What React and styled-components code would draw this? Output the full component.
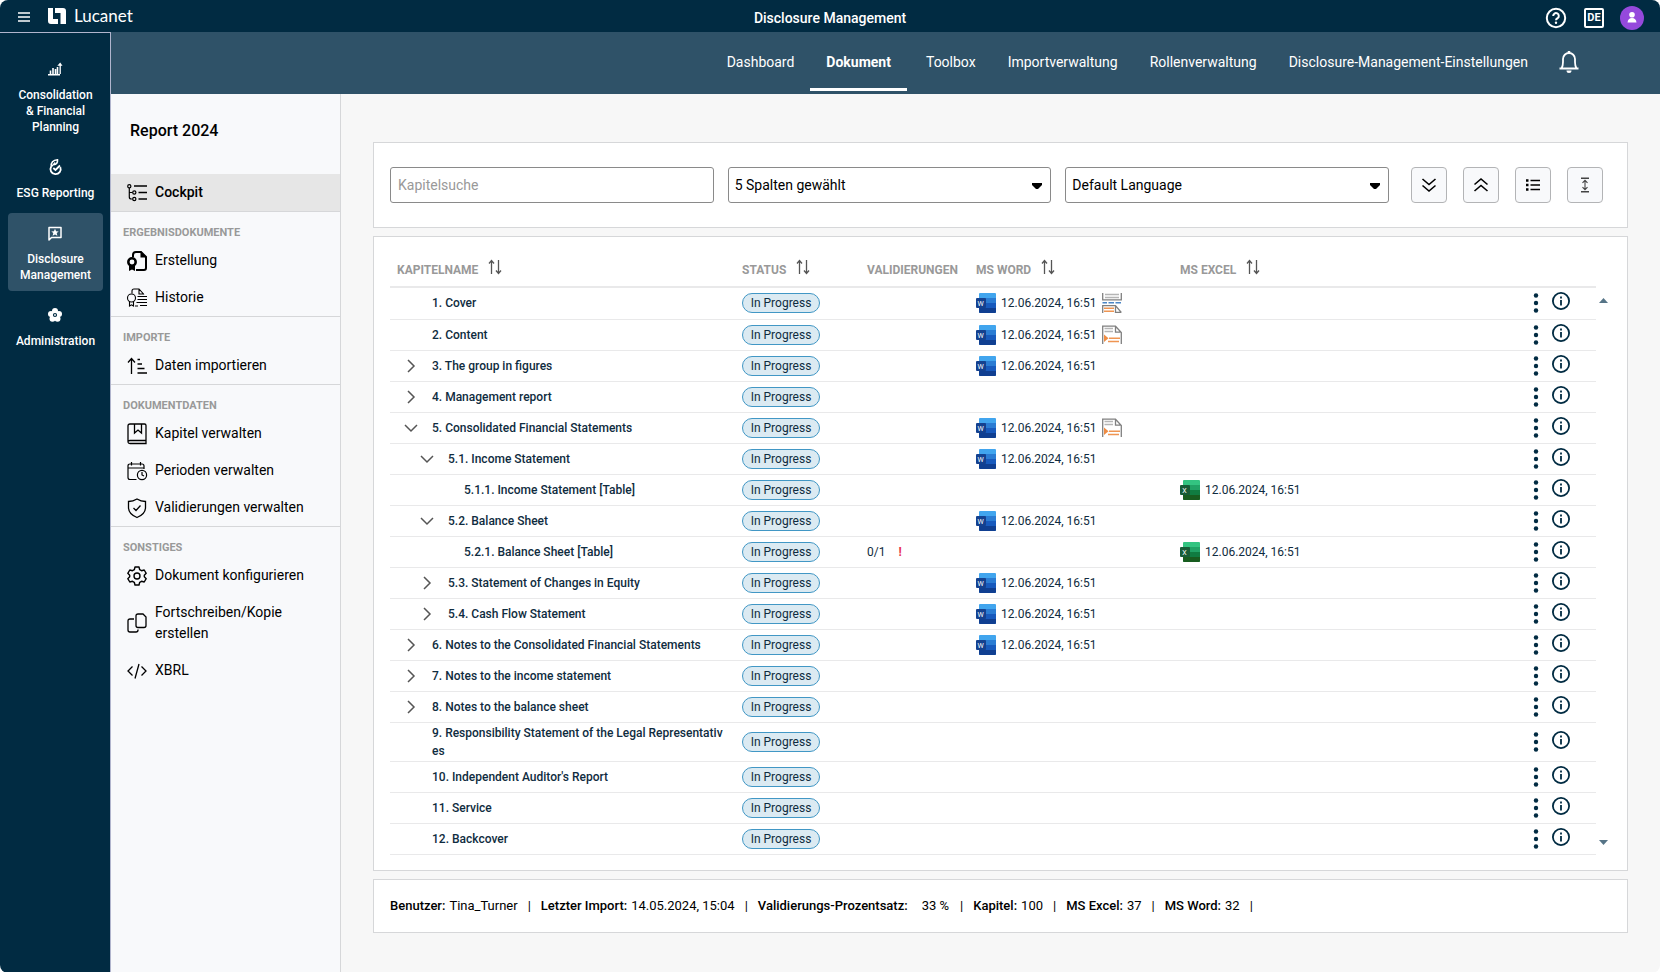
import React from "react";
import styled, { createGlobalStyle, css } from "styled-components";

const color = {
  navy: "#012b42",
  steel: "#2f5268",
  ink: "#0f2c40",
  muted: "#999999",
  line: "#d6d7d9",
  rowLine: "#e9e9ea",
  page: "#f7f7f7",
  panel: "#f8f9fb",
};

const GlobalStyle = createGlobalStyle`
  *, *::before, *::after { box-sizing: border-box; }
  body {
    margin: 0;
    background: #ffffff;
    color: #000000;
    font-family: Roboto, "Liberation Sans", sans-serif;
    font-size: 14px;
  }
  button, input, select { font: inherit; color: inherit; }
  a { color: inherit; text-decoration: none; }
  svg { display: block; flex: none; }
`;

/* ---------- Shell ---------- */

const Shell = styled.div`
  display: flex;
  flex-direction: column;
  min-height: 100vh;
  border-radius: 8px;
  overflow: hidden;
  background: ${color.page};
`;

const TopBar = styled.header`
  display: grid;
  grid-template-columns: 1fr auto 1fr;
  align-items: center;
  height: 32px;
  padding: 0 16px;
  background: ${color.navy};
  color: #ffffff;
`;

const TopGroup = styled.div`
  display: flex;
  align-items: center;
  gap: 16px;
  justify-content: ${(p) => (p.$end ? "flex-end" : "flex-start")};
  padding-top: ${(p) => (p.$end ? "4px" : "0")};
`;

const BareButton = styled.button`
  display: flex;
  align-items: center;
  justify-content: center;
  padding: 0;
  border: 0;
  background: none;
  cursor: pointer;
`;

const HelpButton = styled(BareButton)`
  width: 24px;
`;

const Brand = styled.a`
  display: flex;
  align-items: center;
  gap: 8px;
  font-family: Lato, Roboto, sans-serif;
  font-size: 17px;
  line-height: 24px;
`;

const AppTitle = styled.div`
  padding-top: 4px;
  font-size: 14px;
  font-weight: 500;
  line-height: 20px;
`;

const LanguageButton = styled(BareButton)`
  width: 20px;
  height: 20px;
  border: 2px solid #ffffff;
  border-radius: 2px;
  font-size: 11px;
  font-weight: 700;
  line-height: 16px;
`;

const Avatar = styled(BareButton)`
  width: 24px;
  height: 24px;
  border-radius: 50%;
  background: #9549dc;
`;

const Body = styled.div`
  display: flex;
  flex: 1;
`;

const ProductNav = styled.nav`
  display: flex;
  flex-direction: column;
  gap: 4px;
  flex: none;
  width: 111px;
  padding: 16px 7px 16px 8px;
  border-top: 1px solid #b1b5cd;
  border-right: 1px solid #b1b5cd;
  background: ${color.navy};
`;

const ProductLink = styled.a`
  display: flex;
  flex-direction: column;
  align-items: center;
  gap: 10px;
  padding: 12px 8px 8px;
  border-radius: 4px;
  background: ${(p) => (p.$active ? color.steel : "transparent")};
  color: #ffffff;
  font-size: 12px;
  font-weight: 500;
  line-height: 16px;
  text-align: center;
`;

const Workspace = styled.div`
  display: flex;
  flex-direction: column;
  flex: 1;
  min-width: 0;
`;

const TabBar = styled.nav`
  display: flex;
  justify-content: flex-end;
  align-items: center;
  height: 62px;
  padding-right: 80px;
  background: ${color.steel};
  color: #ffffff;
`;

const Tab = styled.a`
  display: flex;
  align-items: center;
  height: 56px;
  padding: 0 16px;
  border-bottom: 3px solid transparent;
  line-height: 20px;
  ${(p) =>
    p.$active &&
    css`
      margin-right: 3px;
      border-color: #ffffff;
      font-weight: 700;
    `}
`;

const BellButton = styled(BareButton)`
  width: 22px;
  height: 24px;
  margin: 0 0 2px 14px;
`;

const Columns = styled.div`
  display: flex;
  flex: 1;
`;

/* ---------- Report sidebar ---------- */

const Sidebar = styled.aside`
  flex: none;
  width: 230px;
  border-right: 1px solid ${color.line};
  background: ${color.panel};
`;

const ReportTitle = styled.h1`
  margin: 0;
  padding: 25px 19px 31px;
  font-size: 16px;
  font-weight: 500;
  line-height: 24px;
`;

const MenuSection = styled.section`
  border-bottom: ${(p) => (p.$last ? "0" : `1px solid ${color.line}`)};
`;

const MenuHeading = styled.h2`
  margin: 0;
  padding: 13px 12px 1px;
  color: ${color.muted};
  font-size: 11px;
  font-weight: 700;
  line-height: 16px;
`;

const MenuLink = styled.a`
  display: flex;
  align-items: center;
  gap: 8px;
  min-height: 37px;
  padding: 8px 16px;
  line-height: 21px;
  ${(p) =>
    p.$active &&
    css`
      background: #e6e6e6;
      font-weight: 500;
    `}
`;

/* ---------- Main area ---------- */

const Main = styled.main`
  display: flex;
  flex-direction: column;
  gap: 8px;
  flex: 1;
  min-width: 0;
  padding: 48px 32px 40px;
`;

const Card = styled.section`
  border: 1px solid ${color.line};
  background: #ffffff;
`;

const Toolbar = styled(Card)`
  display: flex;
  align-items: center;
  gap: 22px;
  padding: 24px 24px 24px 16px;
`;

const Fields = styled.div`
  display: grid;
  grid-template-columns: repeat(3, 1fr);
  gap: 14px;
  flex: 1;
`;

const fieldStyle = css`
  width: 100%;
  height: 36px;
  border: 1px solid #8a8a8a;
  border-radius: 3px;
  background: #ffffff;
`;

const SearchInput = styled.input`
  ${fieldStyle}
  padding: 0 7px;
  &::placeholder {
    color: ${color.muted};
    opacity: 1;
  }
`;

const SelectBox = styled.div`
  position: relative;
  svg {
    position: absolute;
    top: 16px;
    right: 9px;
    pointer-events: none;
  }
`;

const Select = styled.select`
  ${fieldStyle}
  padding: 0 24px 0 6px;
  appearance: none;
`;

const ButtonGroup = styled.div`
  display: flex;
  gap: 16px;
`;

const ToolButton = styled(BareButton)`
  width: 36px;
  height: 36px;
  border: 1px solid #b3b4b6;
  border-radius: 4px;
  background: ${color.panel};
`;

const TableCard = styled(Card)`
  display: flex;
  padding: 16px 16px 15px;
`;

const Table = styled.table`
  flex: 1;
  width: 100%;
  table-layout: fixed;
  border-collapse: separate;
  border-spacing: 0;
  color: ${color.ink};
  font-size: 12px;
  line-height: 18px;
`;

const HeadCell = styled.th`
  width: ${(p) => p.$width || "auto"};
  height: 35px;
  padding: 0 7px;
  border-bottom: 2px solid ${color.rowLine};
  color: ${color.muted};
  font-weight: 700;
  text-align: left;
  white-space: nowrap;
`;

const HeadLabel = styled.span`
  display: flex;
  align-items: center;
  gap: 10px;
  padding-top: 1px;
  button {
    margin-bottom: 6px;
  }
`;

const Row = styled.tr`
  td {
    height: 31px;
  }
  &:first-child td {
    height: 32px;
    padding-bottom: 3px;
  }
`;

const Cell = styled.td`
  padding: 1px 7px;
  border-bottom: 1px solid ${color.rowLine};
`;

const NameLine = styled.div`
  display: flex;
  align-items: center;
  padding-left: ${(p) => (p.$level - 1) * 16 + 6}px;
`;

const ChevronSlot = styled.span`
  display: flex;
  justify-content: center;
  flex: none;
  width: 16px;
  margin-right: 13px;
`;

const ChapterName = styled.span`
  font-weight: 500;
  word-break: break-all;
`;

const StatusPill = styled.span`
  display: block;
  width: 78px;
  height: 20px;
  border: 1px solid #4197c5;
  border-radius: 10px;
  background: #dbeaf2;
  line-height: 18px;
  text-align: center;
`;

const FileLink = styled.a`
  display: flex;
  align-items: center;
  gap: 5px;
`;

const Validation = styled.span`
  display: flex;
  gap: 13px;
  strong {
    color: #e8334f;
    font-weight: 700;
  }
`;

const RowActions = styled.div`
  display: flex;
  justify-content: flex-end;
  align-items: center;
  gap: 13px;
  padding-right: 19px;
`;

const InfoButton = styled(BareButton)`
  margin-bottom: 4px;
`;

const ScrollRail = styled.div`
  display: flex;
  flex-direction: column;
  justify-content: space-between;
  align-items: center;
  flex: none;
  width: 15px;
  padding: 45px 0 10px;
`;

const StatusBar = styled(Card)`
  display: flex;
  flex-wrap: wrap;
  padding: 16px;
  font-size: 13px;
  line-height: 20px;
`;

const Stat = styled.span`
  display: flex;
  gap: ${(p) => (p.$wide ? "14px" : "4px")};
  b {
    font-weight: 500;
  }
  &::after {
    content: "|";
    margin: 0 10px 0 ${(p) => (p.$wide ? "-3px" : "6px")};
  }
`;

/* ---------- Icons ---------- */

const Svg = ({ w = 20, h = 20, x = 0, sw = 1, children, ...rest }) => (
  <svg
    width={w}
    height={h}
    viewBox={`${x} 0 ${w} ${h}`}
    fill="none"
    stroke="currentColor"
    strokeWidth={sw}
    overflow="visible"
    aria-hidden="true"
    {...rest}
  >
    {children}
  </svg>
);

const HamburgerIcon = () => (
  <Svg w={16} h={16} sw={1.6}>
    <path d="M2 5H14M2 9H14M2 13H14" />
  </Svg>
);

const LogoIcon = () => (
  <Svg w={18} h={16} stroke="none" fill="#ffffff">
    <path d="M0 0H5V11H10V16H3Q0 16 0 13Z" />
    <path d="M7 0H15Q18 0 18 3V16H12.500V5H7Z" />
  </Svg>
);

const HelpIcon = () => (
  <Svg w={22} h={22} sw={2}>
    <circle cx="11" cy="11" r="9.200" />
    <path d="M8.200 9A2.800 2.800 0 1 1 12.600 11.200Q11 12.200 11 13.200" />
    <circle cx="11" cy="15.800" r="1.200" fill="currentColor" stroke="none" />
  </Svg>
);

const UserIcon = () => (
  <Svg w={12} h={14} stroke="none" fill="#ffffff">
    <circle cx="6" cy="3.800" r="2.800" />
    <path d="M1.500 11.500Q2 7 6 7T10.500 11.500Z" />
  </Svg>
);

const BellIcon = () => (
  <Svg w={22} h={24} sw={1.8}>
    <path d="M1.500 18.500H20.500M3.500 18.500Q5 16 5 12V9A6 6 0 0 1 17 9V12Q17 16 18.500 18.500" />
    <path d="M11 1V3" strokeWidth="2.500" />
    <path d="M8.500 20.500A2.500 2.500 0 0 0 13.500 20.500Z" fill="currentColor" stroke="none" />
  </Svg>
);

const ChartIcon = () => (
  <Svg w={16} h={16} x={1}>
    <path d="M1 13.700H13" strokeWidth="1.400" />
    <path d="M3.500 13V9.500M6 13V7M8.500 13V8M10.500 13V6" strokeWidth="1.600" />
    <path d="M13.200 13V3" strokeWidth="1.300" />
    <path d="M10.300 4.800L13.200 1.500L15.500 4.800Z" fill="currentColor" stroke="none" />
  </Svg>
);

const LeafIcon = () => (
  <Svg w={16} h={16} x={0} sw={1.800}>
    <path d="M12.300 8.200A5.100 5.100 0 1 1 3.200 7.500" />
    <path d="M3.300 7.500C2.800 3.500 5 1 9.500 .8C9.800 3.500 8.500 5.500 5.500 5.800" strokeWidth="1.600" />
    <path d="M3.300 7.800L7.200 3.500" strokeWidth="1.200" />
    <path d="M5.300 9L7.500 11L12 6.500" />
  </Svg>
);

const DisclosureIcon = () => (
  <Svg w={16} h={16} x={1} sw={1.5}>
    <path d="M2 15V2.500H14V12.500H4.500Z" strokeLinejoin="round" />
    <path
      d="M8 3.800L9.100 6.200L11.700 6.400L9.700 8.100L10.400 10.800L8 9.400L5.600 10.800L6.300 8.100L4.300 6.400L6.900 6.200Z"
      fill="currentColor"
      stroke="none"
    />
  </Svg>
);

const FlowerIcon = () => (
  <Svg w={16} h={16} x={1} stroke="none" fill="#ffffff">
    <circle cx="8" cy="4" r="3" />
    <circle cx="12" cy="7" r="3" />
    <circle cx="10.500" cy="11.800" r="3" />
    <circle cx="5.500" cy="11.800" r="3" />
    <circle cx="4" cy="7" r="3" />
    <circle cx="8" cy="8" r="3.500" />
    <circle cx="8" cy="8" r="1.500" fill="#ffffff" stroke={color.navy} strokeWidth="1.200" />
  </Svg>
);

const TreeIcon = () => (
  <Svg sw={1.2}>
    <circle cx="2.300" cy="3.300" r="1.600" />
    <circle cx="7.300" cy="9.500" r="1.600" />
    <circle cx="7.300" cy="16" r="1.600" />
    <path d="M2.300 5V14Q2.300 16 4.300 16H5.500M2.300 9.500H5.500" />
    <path d="M7 3H20M11.500 9.500H20M11.500 16H20" strokeWidth="1.400" />
  </Svg>
);

const CertificateIcon = () => (
  <Svg sw={2}>
    <path d="M6 6V4Q6 1 9 1H14L19 6V17Q19 19 17 19H9" />
    <path d="M13.500 0V6.500H20L13.500 0Z" fill="currentColor" stroke="none" />
    <circle cx="5" cy="11" r="3.700" strokeWidth="2.500" />
    <path d="M2 14V20L5 18.500L8 20V14Z" fill="currentColor" stroke="none" />
  </Svg>
);

const HistoryIcon = () => (
  <Svg sw={1.1}>
    <path d="M5 5.500V3Q5 1 7 1H12L17 6.500M12 1V6H17" />
    <circle cx="4.500" cy="10" r="4" />
    <path d="M2.500 13.500V18L4.500 16.800L6.500 18V13.500M8 18H11" />
    <path d="M10.500 8.500H20M10.500 11.500H20M9.500 14.500H20M13 17.500H20" />
  </Svg>
);

const ImportIcon = () => (
  <Svg sw={1.3}>
    <path d="M4.500 18V3M1 6.500L4.500 2.500L8 6.500" />
    <path d="M10.500 3.500H13M10.500 8H15M10.500 12.500H17.500M10.500 17H20" />
  </Svg>
);

const BookIcon = () => (
  <Svg w={20} h={21} sw={1.3}>
    <path d="M1 18.500V3Q1 1 3 1H17.500Q19 1 19 2.500V17.500H3Q1 17.500 1 19T3 20.500H19V17.500" />
    <path d="M7.500 1V10L11 7L14.500 10V1" />
  </Svg>
);

const CalendarIcon = () => (
  <Svg sw={1.2}>
    <path d="M9.500 18.500H3Q1 18.500 1 16.500V5Q1 3 3 3H15Q17 3 17 5V8M1 7H17M4.500 1V4.500M13.500 1V4.500" />
    <circle cx="15" cy="14" r="4.600" />
    <path d="M15 11V14L17 15" />
  </Svg>
);

const ShieldIcon = () => (
  <Svg sw={1.3}>
    <path d="M10 1Q14 3.500 18.500 3.500V9.500Q18.500 16 10 19.500Q1.500 16 1.500 9.500V3.500Q6 3.500 10 1Z" />
    <path d="M6.500 10L9 12.500L13.500 7.500" />
  </Svg>
);

const GearIcon = () => (
  <Svg sw={1.4}>
    <circle cx="10" cy="10" r="3" />
    <path
      strokeLinejoin="round"
      d="M8 1H12L12.700 3.700L14.500 4.700L17.200 4L19.200 7.300L17.300 9.200V10.800L19.200 12.700L17.200 16L14.500 15.300L12.700 16.300L12 19H8L7.300 16.300L5.500 15.300L2.800 16L.8 12.700L2.700 10.800V9.200L.8 7.300L2.800 4L5.500 4.700L7.300 3.700Z"
    />
  </Svg>
);

const CopyIcon = () => (
  <Svg sw={1.3}>
    <path d="M11 1H16L19 4V12.500Q19 14.500 17 14.500H11Q9 14.500 9 12.500V3Q9 1 11 1Z" />
    <path d="M7 6H3Q1 6 1 8V17Q1 19 3 19H9Q11 19 11 17V16.500" />
  </Svg>
);

const CodeIcon = () => (
  <Svg sw={1.3}>
    <path d="M5.500 5.500L1 10L5.500 14.500M14.500 5.500L19 10L14.500 14.500M12 3L8 17.500" />
  </Svg>
);

const CaretIcon = () => (
  <Svg w={10} h={7} stroke="none" fill="#000000">
    <path d="M0 0H10V2L6 6H4L0 2Z" />
  </Svg>
);

const DoubleDownIcon = () => (
  <Svg w={16} h={16} sw={1.6}>
    <path d="M1.500 2L8 7.500L14.500 2M1.500 8.500L8 14L14.500 8.500" />
  </Svg>
);

const DoubleUpIcon = () => (
  <Svg w={16} h={16} sw={1.6}>
    <path d="M1.500 7.500L8 2L14.500 7.500M1.500 14L8 8.500L14.500 14" />
  </Svg>
);

const ListIcon = () => (
  <Svg w={16} h={14} sw={1.4}>
    <path d="M5.500 2.500H15M5.500 7H15M5.500 11.500H15" />
    <path d="M1 2.500H3.500M1 7H3.500M1 11.500H3.500" strokeWidth="2.400" />
  </Svg>
);

const HeightIcon = () => (
  <Svg w={10} h={16} sw={1.1} stroke="#444444">
    <path d="M1 1.200H9M1 14.800H9" strokeWidth="1.600" />
    <path d="M5 3.500V12.500M2.500 5.800L5 3.300L7.500 5.800M2.500 10.200L5 12.700L7.500 10.200" />
  </Svg>
);

const SortIcon = () => (
  <Svg w={14} h={16} sw={1.3} stroke="#555555">
    <path d="M3.500 15V2M1 4.500L3.500 1.500L6 4.500M10.500 1V14M8 11.500L10.500 14.500L13 11.500" />
  </Svg>
);

const ChevronIcon = ({ open }) => (
  <Svg w={14} h={14} sw={1.5} stroke="#555555">
    <path d={open ? "M1 4L7 10L13 4" : "M4 1L10 7L4 13"} />
  </Svg>
);

const OfficeIcon = ({ letter, shades }) => (
  <Svg stroke="none">
    <rect x="3" width="17" height="20" rx="1" fill={shades[0]} />
    <rect x="3" y="5" width="17" height="5" fill={shades[1]} />
    <rect x="3" y="10" width="17" height="5" fill={shades[2]} />
    <path d="M3 15H20V19Q20 20 19 20H4Q3 20 3 19Z" fill={shades[3]} />
    <rect y="5" width="10" height="10" rx="1" fill={shades[4]} />
    <text
      x="4.500"
      y="12.500"
      fill="#ffffff"
      fontSize="7"
      fontWeight="400"
      textAnchor="middle"
      fontFamily="Roboto, sans-serif"
    >
      {letter}
    </text>
  </Svg>
);

const WordIcon = () => (
  <OfficeIcon letter="W" shades={["#41a5ee", "#2b7cd3", "#185abd", "#103f91", "#14418f"]} />
);

const ExcelIcon = () => (
  <OfficeIcon letter="X" shades={["#33c481", "#21a366", "#107c41", "#185c1f", "#185c37"]} />
);

const PageBreakIcon = () => (
  <Svg sw={1.3} stroke="#808080">
    <path d="M.7 0V6.800H19.300V0M.7 20V12.700H13.500L19.300 19.500M13.500 12.700V19.300H19.300" />
    <path d="M3 1.500H17M3 4.500H17" stroke="#b5b5b5" />
    <path d="M.5 9.700H5M6.500 9.700H12M13.500 9.700H19" stroke="#4a86c6" strokeWidth="1.600" />
    <path d="M2 15.300H12M2 18.300H12" stroke="#ef9552" strokeWidth="1.400" />
  </Svg>
);

const PageIndentIcon = () => (
  <Svg sw={1.3} stroke="#808080">
    <path d="M.7 19V1.200H13.500L19.300 7.500V19M13.500 1.200V7.200H19.300" />
    <path d="M2.500 3.500H11M2.500 6.500H11" stroke="#b5b5b5" />
    <path d="M2 9.500V17L6.500 13.200Z" fill="#ef8c43" stroke="none" />
    <path d="M7 13.200H18M6 16.500H17" stroke="#ef9552" strokeWidth="1.400" />
  </Svg>
);

const DotsIcon = () => (
  <Svg w={6} h={20} stroke="none" fill={color.navy}>
    <circle cx="3" cy="2.500" r="2.200" />
    <circle cx="3" cy="10" r="2.200" />
    <circle cx="3" cy="17.500" r="2.200" />
  </Svg>
);

const InfoIcon = () => (
  <Svg w={18} h={18} sw={1.8} stroke={color.navy}>
    <circle cx="9" cy="9" r="8.100" />
    <path d="M9 8V13.500M9 4.500V6.500" />
  </Svg>
);

const RailArrow = ({ up }) => (
  <Svg w={9} h={5} stroke="none" fill="#567487">
    <path d={up ? "M0 5L4.500 0L9 5Z" : "M0 0H9L4.500 5Z"} />
  </Svg>
);

/* ---------- Data ---------- */

const products = [
  { label: "Consolidation & Financial Planning", Icon: ChartIcon },
  { label: "ESG Reporting", Icon: LeafIcon },
  { label: "Disclosure Management", Icon: DisclosureIcon, active: true },
  { label: "Administration", Icon: FlowerIcon },
];

const tabs = [
  "Dashboard",
  "Dokument",
  "Toolbox",
  "Importverwaltung",
  "Rollenverwaltung",
  "Disclosure-Management-Einstellungen",
];

const menu = [
  {
    title: "ERGEBNISDOKUMENTE",
    items: [
      { label: "Erstellung", Icon: CertificateIcon },
      { label: "Historie", Icon: HistoryIcon },
    ],
  },
  { title: "IMPORTE", items: [{ label: "Daten importieren", Icon: ImportIcon }] },
  {
    title: "DOKUMENTDATEN",
    items: [
      { label: "Kapitel verwalten", Icon: BookIcon },
      { label: "Perioden verwalten", Icon: CalendarIcon },
      { label: "Validierungen verwalten", Icon: ShieldIcon },
    ],
  },
  {
    title: "SONSTIGES",
    items: [
      { label: "Dokument konfigurieren", Icon: GearIcon },
      { label: "Fortschreiben/Kopie erstellen", Icon: CopyIcon },
      { label: "XBRL", Icon: CodeIcon },
    ],
  },
];

const stamp = "12.06.2024, 16:51";

const chapters = [
  { name: "1. Cover", level: 1, word: stamp, Page: PageBreakIcon },
  { name: "2. Content", level: 1, word: stamp, Page: PageIndentIcon },
  { name: "3. The group in figures", level: 1, toggle: "closed", word: stamp },
  { name: "4. Management report", level: 1, toggle: "closed" },
  { name: "5. Consolidated Financial Statements", level: 1, toggle: "open", word: stamp, Page: PageIndentIcon },
  { name: "5.1. Income Statement", level: 2, toggle: "open", word: stamp },
  { name: "5.1.1. Income Statement [Table]", level: 3, excel: stamp },
  { name: "5.2. Balance Sheet", level: 2, toggle: "open", word: stamp },
  { name: "5.2.1. Balance Sheet [Table]", level: 3, excel: stamp, validation: "0/1" },
  { name: "5.3. Statement of Changes in Equity", level: 2, toggle: "closed", word: stamp },
  { name: "5.4. Cash Flow Statement", level: 2, toggle: "closed", word: stamp },
  { name: "6. Notes to the Consolidated Financial Statements", level: 1, toggle: "closed", word: stamp },
  { name: "7. Notes to the income statement", level: 1, toggle: "closed" },
  { name: "8. Notes to the balance sheet", level: 1, toggle: "closed" },
  { name: "9. Responsibility Statement of the Legal Representatives", level: 1 },
  { name: "10. Independent Auditor's Report", level: 1 },
  { name: "11. Service", level: 1 },
  { name: "12. Backcover", level: 1 },
];

const headers = [
  { label: "KAPITELNAME", width: "345px", sortable: true },
  { label: "STATUS", width: "125px", sortable: true },
  { label: "VALIDIERUNGEN", width: "109px" },
  { label: "MS WORD", width: "204px", sortable: true },
  { label: "MS EXCEL", sortable: true },
];

const stats = [
  { label: "Benutzer:", value: "Tina_Turner" },
  { label: "Letzter Import:", value: "14.05.2024, 15:04" },
  { label: "Validierungs-Prozentsatz:", value: "33 %", wide: true },
  { label: "Kapitel:", value: "100" },
  { label: "MS Excel:", value: "37" },
  { label: "MS Word:", value: "32" },
];

/* ---------- Components ---------- */

const ChapterRow = ({ chapter }) => {
  const { name, level, toggle, word, excel, validation, Page } = chapter;
  return (
    <Row>
      <Cell>
        <NameLine $level={level}>
          <ChevronSlot>
            {toggle && (
              <BareButton type="button" aria-label={toggle === "open" ? "Zuklappen" : "Aufklappen"}>
                <ChevronIcon open={toggle === "open"} />
              </BareButton>
            )}
          </ChevronSlot>
          <ChapterName>{name}</ChapterName>
        </NameLine>
      </Cell>
      <Cell>
        <StatusPill>In Progress</StatusPill>
      </Cell>
      <Cell>
        {validation && (
          <Validation>
            {validation} <strong>!</strong>
          </Validation>
        )}
      </Cell>
      <Cell>
        {word && (
          <FileLink href="#word">
            <WordIcon />
            {word}
            {Page && <Page />}
          </FileLink>
        )}
      </Cell>
      <Cell>
        {excel && (
          <FileLink href="#excel">
            <ExcelIcon />
            {excel}
          </FileLink>
        )}
      </Cell>
      <Cell>
        <RowActions>
          <BareButton type="button" aria-label="Aktionen">
            <DotsIcon />
          </BareButton>
          <InfoButton type="button" aria-label="Info">
            <InfoIcon />
          </InfoButton>
        </RowActions>
      </Cell>
    </Row>
  );
};

export default function App() {
  return (
    <>
      <GlobalStyle />
      <Shell>
        <TopBar>
          <TopGroup>
            <BareButton type="button" aria-label="Menü">
              <HamburgerIcon />
            </BareButton>
            <Brand href="#home">
              <LogoIcon />
              Lucanet
            </Brand>
          </TopGroup>
          <AppTitle>Disclosure Management</AppTitle>
          <TopGroup $end>
            <HelpButton type="button" aria-label="Hilfe">
              <HelpIcon />
            </HelpButton>
            <LanguageButton type="button">DE</LanguageButton>
            <Avatar type="button" aria-label="Benutzerkonto">
              <UserIcon />
            </Avatar>
          </TopGroup>
        </TopBar>
        <Body>
          <ProductNav>
            {products.map(({ label, Icon, active }) => (
              <ProductLink key={label} href="#product" $active={active}>
                <Icon />
                {label}
              </ProductLink>
            ))}
          </ProductNav>
          <Workspace>
            <TabBar>
              {tabs.map((label) => (
                <Tab key={label} href="#tab" $active={label === "Dokument"}>
                  {label}
                </Tab>
              ))}
              <BellButton type="button" aria-label="Benachrichtigungen">
                <BellIcon />
              </BellButton>
            </TabBar>
            <Columns>
              <Sidebar>
                <ReportTitle>Report 2024</ReportTitle>
                <MenuSection>
                  <MenuLink href="#cockpit" $active>
                    <TreeIcon />
                    Cockpit
                  </MenuLink>
                </MenuSection>
                {menu.map(({ title, items }, i) => (
                  <MenuSection key={title} $last={i === menu.length - 1}>
                    <MenuHeading>{title}</MenuHeading>
                    {items.map(({ label, Icon }) => (
                      <MenuLink key={label} href="#menu">
                        <Icon />
                        {label}
                      </MenuLink>
                    ))}
                  </MenuSection>
                ))}
              </Sidebar>
              <Main>
                <Toolbar>
                  <Fields>
                    <SearchInput type="search" placeholder="Kapitelsuche" aria-label="Kapitelsuche" />
                    <SelectBox>
                      <Select aria-label="Spalten">
                        <option>5 Spalten gewählt</option>
                      </Select>
                      <CaretIcon />
                    </SelectBox>
                    <SelectBox>
                      <Select aria-label="Sprache">
                        <option>Default Language</option>
                      </Select>
                      <CaretIcon />
                    </SelectBox>
                  </Fields>
                  <ButtonGroup>
                    <ToolButton type="button" aria-label="Alle aufklappen">
                      <DoubleDownIcon />
                    </ToolButton>
                    <ToolButton type="button" aria-label="Alle zuklappen">
                      <DoubleUpIcon />
                    </ToolButton>
                    <ToolButton type="button" aria-label="Liste">
                      <ListIcon />
                    </ToolButton>
                    <ToolButton type="button" aria-label="Zeilenhöhe">
                      <HeightIcon />
                    </ToolButton>
                  </ButtonGroup>
                </Toolbar>
                <TableCard>
                  <Table>
                    <thead>
                      <tr>
                        {headers.map(({ label, width, sortable }) => (
                          <HeadCell key={label} $width={width} scope="col">
                            <HeadLabel>
                              {label}
                              {sortable && (
                                <BareButton type="button" aria-label={`${label} sortieren`}>
                                  <SortIcon />
                                </BareButton>
                              )}
                            </HeadLabel>
                          </HeadCell>
                        ))}
                        <HeadCell $width="100px" aria-label="Aktionen" />
                      </tr>
                    </thead>
                    <tbody>
                      {chapters.map((chapter) => (
                        <ChapterRow key={chapter.name} chapter={chapter} />
                      ))}
                    </tbody>
                  </Table>
                  <ScrollRail>
                    <RailArrow up />
                    <RailArrow />
                  </ScrollRail>
                </TableCard>
                <StatusBar>
                  {stats.map(({ label, value, wide }) => (
                    <Stat key={label} $wide={wide}>
                      <b>{label}</b>
                      {value}
                    </Stat>
                  ))}
                </StatusBar>
              </Main>
            </Columns>
          </Workspace>
        </Body>
      </Shell>
    </>
  );
}
